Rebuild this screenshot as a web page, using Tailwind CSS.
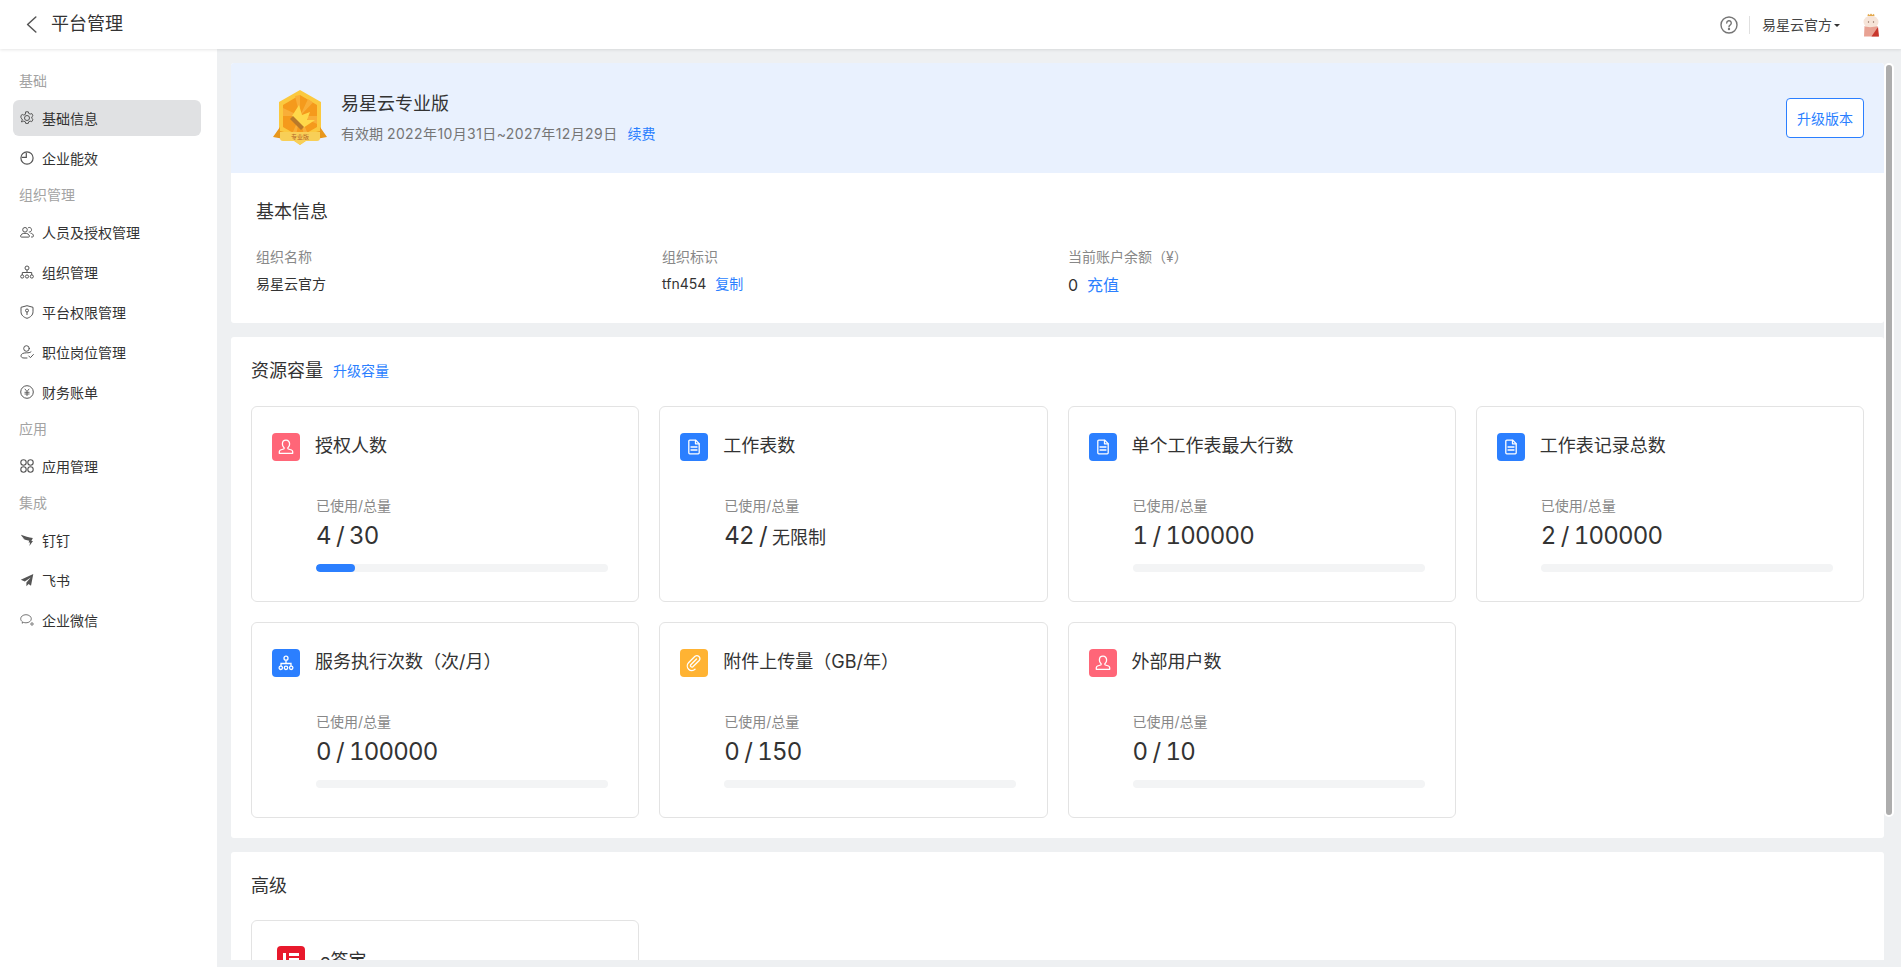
<!DOCTYPE html>
<html lang="zh">
<head>
<meta charset="utf-8">
<title>平台管理</title>
<script src="https://cdn.jsdelivr.net/npm/@tailwindcss/browser@4"></script>
</head>
<body class="h-screen overflow-hidden flex flex-col bg-[#eef0f2] text-[#333] font-['Inter','Noto_Sans_CJK_SC',sans-serif]">

<header class="relative z-10 h-[49px] shrink-0 bg-white shadow-[0_1px_3px_rgba(0,0,0,0.1)] flex items-center pl-[26px] pr-[21px]">
  <svg class="w-[11px] h-[17px]" viewBox="0 0 11 17" fill="none" stroke="#555" stroke-width="1.500" stroke-linecap="round" stroke-linejoin="round"><path d="M9.800 1 1.600 8.500l8.200 7.500"/></svg>
  <h1 class="ml-[14px] pb-[2px] text-[18px] leading-none font-normal text-[#333]">平台管理</h1>
  <div class="ml-auto flex items-center">
    <svg class="w-[18px] h-[18px]" viewBox="0 0 18 18" fill="none" stroke="#757575" stroke-width="1.400"><circle cx="9" cy="9" r="8"/><path d="M6.700 7.100a2.300 2.300 0 1 1 3.400 2c-.8.500-1.100.9-1.100 1.700" stroke-linecap="round"/><circle cx="9" cy="13" r=".5" fill="#757575"/></svg>
    <span class="ml-[11px] mr-[12px] h-[18px] w-px bg-[#e0e0e0]"></span>
    <span class="text-[14px] text-[#444]">易星云官方</span>
    <span class="ml-[2px] mt-px w-0 h-0 border-x-[3px] border-x-transparent border-t-[3px] border-t-[#333]"></span>
    <svg class="ml-[22px] w-[18px] h-[24px]" viewBox="0 0 18 24">
      <ellipse cx="9" cy="9" rx="7.500" ry="6.500" fill="#f6e4d8"/>
      <path d="M5.500 3 6 .8l1.600 1.200L9 .4l1.400 1.600L12 .8l.5 2.200z" fill="#e2a84a"/>
      <path d="M2.500 13c2 1.500 9 1.500 13 0l1 10.500H2z" fill="#e8a293"/>
      <path d="M9.500 23.500 16 14l1 9.500z" fill="#c8362c"/>
      <circle cx="6.500" cy="9" r=".7" fill="#8a6a5a"/><circle cx="11.500" cy="9" r=".7" fill="#8a6a5a"/>
    </svg>
  </div>
</header>

<div class="flex-1 min-h-0 flex">
  <nav class="w-[217px] shrink-0 bg-white pt-[15px] pl-[13px] pr-[16px] text-[14px] flex flex-col">
    <div class="h-[32px] pl-[6px] flex items-center text-[#a3a3a3]">基础</div>
    <a class="mt-[4px] mb-[2px] h-[36px] rounded-[6px] bg-[#e0e1e3] pl-[7px] flex items-center gap-[8px]">
      <svg class="w-[14px] h-[14px]" viewBox="0 0 14 14" fill="none" stroke="#555" stroke-width="1"><path d="M5.700.8h2.600l.4 1.600 1.500.7 1.500-.6 1.300 2.200-1.200 1.100v1.600l1.200 1.100-1.300 2.200-1.500-.6-1.500.7-.4 1.600H5.700l-.4-1.600-1.500-.7-1.500.6L1 10.700l1.200-1.100V8L1 6.900l-.1-.2.1-2.200 1.300-1 1.500.6 1.500-.7z" stroke-linejoin="round"/><circle cx="7" cy="7" r="2.500"/></svg>
      基础信息</a>
    <a class="mt-[2px] mb-[2px] h-[36px] pl-[7px] flex items-center gap-[8px]">
      <svg class="w-[14px] h-[14px]" viewBox="0 0 14 14" fill="none" stroke="#555" stroke-width="1.200"><circle cx="7" cy="7" r="6.100"/><path d="M6.300 1.800v4.500H1.800"/></svg>
      企业能效</a>
    <div class="h-[32px] mb-[2px] pl-[6px] flex items-center text-[#a3a3a3]">组织管理</div>
    <a class="my-[2px] h-[36px] pl-[7px] flex items-center gap-[8px]">
      <svg class="w-[14px] h-[14px]" viewBox="0 0 14 14" fill="none" stroke="#555" stroke-width="1"><circle cx="5" cy="4.800" r="2.300"/><path d="M8.200 2.700a2.300 2.300 0 1 1 .6 4.300"/><path d="M.6 11.300c0-2 2-3 4.400-3s4.400 1 4.400 3c0 .5-.3.8-.8.8H1.400c-.5 0-.8-.3-.8-.8z"/><path d="M10.500 8.200c1.700.2 2.900 1.100 2.900 2.700 0 .7-.4 1.100-1 1.100h-1.300"/></svg>
      人员及授权管理</a>
    <a class="my-[2px] h-[36px] pl-[7px] flex items-center gap-[8px]">
      <svg class="w-[14px] h-[14px]" viewBox="0 0 14 14" fill="none" stroke="#555" stroke-width="1"><circle cx="7" cy="3" r="2"/><path d="M7 5v2.500M2.300 10V7.500h9.400V10"/><circle cx="2.200" cy="11.500" r="1.600"/><circle cx="7" cy="11.500" r="1.600"/><circle cx="11.800" cy="11.500" r="1.600"/></svg>
      组织管理</a>
    <a class="my-[2px] h-[36px] pl-[7px] flex items-center gap-[8px]">
      <svg class="w-[14px] h-[14px]" viewBox="0 0 14 14" fill="none" stroke="#555" stroke-width="1"><path d="M7 .7 13 2.300v4.500c0 3.200-2.500 5.500-6 6.500C3.500 12.300 1 10 1 6.800V2.300z" stroke-linejoin="round"/><circle cx="7" cy="5.500" r="1.500"/><path d="M7 7v3"/></svg>
      平台权限管理</a>
    <a class="my-[2px] h-[36px] pl-[7px] flex items-center gap-[8px]">
      <svg class="w-[14px] h-[14px]" viewBox="0 0 14 14" fill="none" stroke="#555" stroke-width="1" stroke-linecap="round" stroke-linejoin="round"><circle cx="6.500" cy="3.500" r="2.800"/><path d="M11 6.800c-1 1-2.500 1-4.500 1C3 7.800 1 9 1 10.800c0 1.300 1 2.200 3 2.200h3"/><path d="m8.800 11 1.600 1.700 3-3.200"/></svg>
      职位岗位管理</a>
    <a class="my-[2px] h-[36px] pl-[7px] flex items-center gap-[8px]">
      <svg class="w-[14px] h-[14px]" viewBox="0 0 14 14" fill="none" stroke="#555" stroke-width="1"><circle cx="7" cy="7" r="6.300"/><path d="M4.800 3.800 7 6.500l2.200-2.700M4.500 7.300h5M4.500 9h5M7 6.500v4.500" stroke-width=".9"/></svg>
      财务账单</a>
    <div class="h-[32px] mb-[2px] pl-[6px] flex items-center text-[#a3a3a3]">应用</div>
    <a class="my-[2px] h-[36px] pl-[7px] flex items-center gap-[8px]">
      <svg class="w-[14px] h-[14px]" viewBox="0 0 14 14" fill="none" stroke="#555" stroke-width="1.100"><circle cx="3.500" cy="3.500" r="2.700"/><circle cx="10.500" cy="3.500" r="2.700"/><circle cx="3.500" cy="10.500" r="2.700"/><circle cx="10.500" cy="10.500" r="2.700"/></svg>
      应用管理</a>
    <div class="h-[32px] mb-[2px] pl-[6px] flex items-center text-[#a3a3a3]">集成</div>
    <a class="my-[2px] h-[36px] pl-[7px] flex items-center gap-[8px]">
      <svg class="w-[14px] h-[14px]" viewBox="0 0 14 14" fill="#555"><path d="M1 1.800c3.500 1.500 8 2.800 11.800 3.200-.3 1-1 2.300-1.500 3H13l-3.600 5 .7-3.400H8.500l.8-1.800C6.500 7.200 3.500 6.200 2.500 5.500l2 .3C3 5 1.700 3.500 1 1.800z"/></svg>
      钉钉</a>
    <a class="my-[2px] h-[36px] pl-[7px] flex items-center gap-[8px]">
      <svg class="w-[14px] h-[14px]" viewBox="0 0 14 14" fill="#555"><path d="M13.300 1 .8 6.700l4 1.700 6-4-4.400 5v3.800l2.200-2.200 2.400 1.700z"/></svg>
      飞书</a>
    <a class="my-[2px] h-[36px] pl-[7px] flex items-center gap-[8px]">
      <svg class="w-[14px] h-[14px]" viewBox="0 0 14 14" fill="none" stroke="#666" stroke-width=".9"><path d="M6 1.700c-3 0-5.300 1.800-5.300 4.100 0 1.300.7 2.300 1.800 3l-.4 1.400 1.600-.8c.8.300 1.500.4 2.300.4 3 0 5.300-1.800 5.300-4s-2.300-4.100-5.300-4.100z"/><circle cx="12" cy="11" r="1.200"/></svg>
      企业微信</a>
  </nav>

  <main class="relative flex-1 min-w-0 pt-[14px] pl-[14px] pr-[17px] pb-[7px]">
    <div class="h-full overflow-hidden flex flex-col gap-[14px]">

      <section class="shrink-0 bg-white rounded-[3px] overflow-hidden">
        <div class="h-[110px] bg-[#e9f1fe] flex items-center pl-[40px] pr-[20px]">
          <svg class="w-[58px] h-[58px] shrink-0" viewBox="0 0 58 58">
            <path d="M29 1 50 13v29L29 56 8 42V13z" fill="#fbc93f"/>
            <path d="M29 6 46 16v22L29 48 12 38V16z" fill="#f59a1c"/>
            <path d="M29 27 24 7l5-1zm0 0 8-17 5 3.500zm0 0h17v8zM29 27H12v-8zm0 0-8 18 4 1.500zm0 0 8 18-4 1.500z" fill="#f9ae38"/>
            <path d="M21 27 28 16l3 10 8-3-3 8 8 0-12 8z" fill="#ffd84a"/>
            <path d="M19 30 22 27 33 38 30 41z" fill="#b8792a"/>
            <path d="M2 48 9 38v4l4 1v7z" fill="#e8971c"/>
            <path d="M56 48 49 38v4l-4 1v7z" fill="#e8971c"/>
            <path d="M9 43h40v6c0 2-1 3-3 3H34l-5 4-5-4H12c-2 0-3-1-3-3z" fill="#f8cf57"/>
            <text x="29" y="50" text-anchor="middle" font-size="6" fill="#b5652a" font-family="Noto Sans CJK SC">专业版</text>
          </svg>
          <div class="ml-[12px] pb-[2px]">
            <div class="text-[18px] leading-[26px] text-[#333]">易星云专业版</div>
            <div class="mt-[7px] text-[14px] leading-[20px] text-[#757575]">有效期 <span class="tracking-[0.4px]">2022年10月31日~2027年12月29日</span><a class="ml-[10px] text-[#2b7fff]">续费</a></div>
          </div>
          <button class="ml-auto w-[78px] h-[40px] bg-white border border-[#2b7fff] rounded-[4px] text-[14px] text-[#2b7fff]">升级版本</button>
        </div>
        <div class="h-[150px] pl-[25px] pt-[28px]">
          <h2 class="text-[18px] leading-[22px] font-normal">基本信息</h2>
          <div class="mt-[24px] grid grid-cols-[406px_406px_1fr] text-[14px]">
            <div>
              <div class="leading-[20px] text-[#888]">组织名称</div>
              <div class="mt-[7px] leading-[20px]">易星云官方</div>
            </div>
            <div>
              <div class="leading-[20px] text-[#888]">组织标识</div>
              <div class="mt-[7px] leading-[20px]">tfn454<a class="ml-[9px] text-[#2b7fff]">复制</a></div>
            </div>
            <div>
              <div class="leading-[20px] text-[#888]">当前账户余额（¥）</div>
              <div class="mt-[8px] leading-[20px] text-[16px]">0<a class="ml-[9px] text-[#2b7fff]">充值</a></div>
            </div>
          </div>
        </div>
      </section>

      <section class="shrink-0 bg-white rounded-[3px] px-[20px] pt-[21px] pb-[20px]">
        <div class="flex items-center h-[24px]">
          <h2 class="text-[18px] font-normal">资源容量</h2>
          <a class="ml-[10px] text-[14px] text-[#2b7fff]">升级容量</a>
        </div>
        <div class="mt-[24px] grid grid-cols-4 gap-[20px]">

          <article class="h-[196px] border border-[#e3e3e3] rounded-[6px] pl-[20px] pt-[25px]">
            <div class="flex items-center gap-[15px] text-[18px]">
              <span class="w-[28px] h-[28px] rounded-[4px] bg-[#ff6678] flex items-center justify-center"><svg class="w-[16px] h-[16px]" viewBox="0 0 16 16" fill="none" stroke="#fff" stroke-width="1.300" stroke-linejoin="round"><path d="M8 1.200c-2.200 0-3.600 1.600-3.600 3.800 0 1.500.6 2.800 1.500 3.500.4.400.3 1.200-.3 1.500L2.500 11c-.8.400-1.200 1-1.200 1.800v1.500h13.400v-1.500c0-.8-.4-1.400-1.200-1.800l-3.100-1c-.6-.3-.7-1.100-.3-1.500.9-.7 1.500-2 1.500-3.500 0-2.200-1.400-3.800-3.600-3.800z"/></svg></span>
              <span class="pb-[2px]">授权人数</span>
            </div>
            <div class="ml-[44px] mt-[35px] w-[292px]">
              <div class="text-[14px] leading-[20px] text-[#888]">已使用/总量</div>
              <div class="mt-[5px] text-[24px] leading-[30px] tabular-nums tracking-[-0.8px] [word-spacing:-0.500px]">4 / 30</div>
              <div class="mt-[13px] h-[8px] rounded-full bg-[#f3f4f5] overflow-hidden"><div class="h-full rounded-full bg-[#2b7fff]" style="width:13.33%"></div></div>
            </div>
          </article>

          <article class="h-[196px] border border-[#e3e3e3] rounded-[6px] pl-[20px] pt-[25px]">
            <div class="flex items-center gap-[15px] text-[18px]">
              <span class="w-[28px] h-[28px] rounded-[4px] bg-[#2b7fff] flex items-center justify-center"><svg class="w-[16px] h-[16px]" viewBox="0 0 16 16" fill="none" stroke="#fff" stroke-width="1.300" stroke-linejoin="round"><path d="M2.800 2.200c0-.6.400-1 1-1H9.800l3.400 3.400v9.200c0 .6-.4 1-1 1H3.800c-.6 0-1-.4-1-1z"/><path d="M9.500 1.500v3.300h3.500M5 8h6M5 11h6" stroke-linecap="round"/></svg></span>
              <span class="pb-[2px]">工作表数</span>
            </div>
            <div class="ml-[44px] mt-[35px] w-[292px]">
              <div class="text-[14px] leading-[20px] text-[#888]">已使用/总量</div>
              <div class="mt-[5px] text-[24px] leading-[30px] tabular-nums tracking-[-0.8px] [word-spacing:-0.500px]">42 / <span class="text-[18px] tracking-normal">无限制</span></div>
            </div>
          </article>

          <article class="h-[196px] border border-[#e3e3e3] rounded-[6px] pl-[20px] pt-[25px]">
            <div class="flex items-center gap-[15px] text-[18px]">
              <span class="w-[28px] h-[28px] rounded-[4px] bg-[#2b7fff] flex items-center justify-center"><svg class="w-[16px] h-[16px]" viewBox="0 0 16 16" fill="none" stroke="#fff" stroke-width="1.300" stroke-linejoin="round"><path d="M2.800 2.200c0-.6.400-1 1-1H9.800l3.400 3.400v9.200c0 .6-.4 1-1 1H3.800c-.6 0-1-.4-1-1z"/><path d="M9.500 1.500v3.300h3.500M5 8h6M5 11h6" stroke-linecap="round"/></svg></span>
              <span class="pb-[2px]">单个工作表最大行数</span>
            </div>
            <div class="ml-[44px] mt-[35px] w-[292px]">
              <div class="text-[14px] leading-[20px] text-[#888]">已使用/总量</div>
              <div class="mt-[5px] text-[24px] leading-[30px] tabular-nums tracking-[-0.8px] [word-spacing:-0.500px]">1 / 100000</div>
              <div class="mt-[13px] h-[8px] rounded-full bg-[#f3f4f5]"></div>
            </div>
          </article>

          <article class="h-[196px] border border-[#e3e3e3] rounded-[6px] pl-[20px] pt-[25px]">
            <div class="flex items-center gap-[15px] text-[18px]">
              <span class="w-[28px] h-[28px] rounded-[4px] bg-[#2b7fff] flex items-center justify-center"><svg class="w-[16px] h-[16px]" viewBox="0 0 16 16" fill="none" stroke="#fff" stroke-width="1.300" stroke-linejoin="round"><path d="M2.800 2.200c0-.6.400-1 1-1H9.800l3.400 3.400v9.200c0 .6-.4 1-1 1H3.800c-.6 0-1-.4-1-1z"/><path d="M9.500 1.500v3.300h3.500M5 8h6M5 11h6" stroke-linecap="round"/></svg></span>
              <span class="pb-[2px]">工作表记录总数</span>
            </div>
            <div class="ml-[44px] mt-[35px] w-[292px]">
              <div class="text-[14px] leading-[20px] text-[#888]">已使用/总量</div>
              <div class="mt-[5px] text-[24px] leading-[30px] tabular-nums tracking-[-0.8px] [word-spacing:-0.500px]">2 / 100000</div>
              <div class="mt-[13px] h-[8px] rounded-full bg-[#f3f4f5]"></div>
            </div>
          </article>

          <article class="h-[196px] border border-[#e3e3e3] rounded-[6px] pl-[20px] pt-[25px]">
            <div class="flex items-center gap-[15px] text-[18px]">
              <span class="w-[28px] h-[28px] rounded-[4px] bg-[#2b7fff] flex items-center justify-center"><svg class="w-[16px] h-[16px]" viewBox="0 0 16 16" fill="none" stroke="#fff" stroke-width="1.300"><circle cx="8" cy="3.200" r="2"/><path d="M8 5.200v3.300M3 11V8.500h10V11"/><circle cx="2.800" cy="12.800" r="1.700"/><circle cx="8" cy="12.800" r="1.700"/><circle cx="13.200" cy="12.800" r="1.700"/></svg></span>
              <span class="pb-[2px]">服务执行次数（次/月）</span>
            </div>
            <div class="ml-[44px] mt-[35px] w-[292px]">
              <div class="text-[14px] leading-[20px] text-[#888]">已使用/总量</div>
              <div class="mt-[5px] text-[24px] leading-[30px] tabular-nums tracking-[-0.8px] [word-spacing:-0.500px]">0 / 100000</div>
              <div class="mt-[13px] h-[8px] rounded-full bg-[#f3f4f5]"></div>
            </div>
          </article>

          <article class="h-[196px] border border-[#e3e3e3] rounded-[6px] pl-[20px] pt-[25px]">
            <div class="flex items-center gap-[15px] text-[18px]">
              <span class="w-[28px] h-[28px] rounded-[4px] bg-[#ffb333] flex items-center justify-center"><svg class="w-[18px] h-[18px]" viewBox="0 0 18 18" fill="none" stroke="#fff" stroke-width="1.300" stroke-linecap="round"><path d="M11.500 6 5.800 11.700a1.500 1.500 0 0 0 2.100 2.100l6.300-6.300a3 3 0 0 0-4.200-4.200L3.500 9.800a4.600 4.600 0 0 0 6.500 6.500" transform="translate(0 -1)"/></svg></span>
              <span class="pb-[2px]">附件上传量（GB/年）</span>
            </div>
            <div class="ml-[44px] mt-[35px] w-[292px]">
              <div class="text-[14px] leading-[20px] text-[#888]">已使用/总量</div>
              <div class="mt-[5px] text-[24px] leading-[30px] tabular-nums tracking-[-0.8px] [word-spacing:-0.500px]">0 / 150</div>
              <div class="mt-[13px] h-[8px] rounded-full bg-[#f3f4f5]"></div>
            </div>
          </article>

          <article class="h-[196px] border border-[#e3e3e3] rounded-[6px] pl-[20px] pt-[25px]">
            <div class="flex items-center gap-[15px] text-[18px]">
              <span class="w-[28px] h-[28px] rounded-[4px] bg-[#ff6678] flex items-center justify-center"><svg class="w-[16px] h-[16px]" viewBox="0 0 16 16" fill="none" stroke="#fff" stroke-width="1.300" stroke-linejoin="round"><path d="M8 1.200c-2.200 0-3.600 1.600-3.600 3.800 0 1.500.6 2.800 1.500 3.500.4.400.3 1.200-.3 1.500L2.500 11c-.8.400-1.200 1-1.200 1.800v1.500h13.400v-1.500c0-.8-.4-1.400-1.200-1.800l-3.100-1c-.6-.3-.7-1.100-.3-1.500.9-.7 1.500-2 1.500-3.500 0-2.200-1.400-3.800-3.600-3.800z"/></svg></span>
              <span class="pb-[2px]">外部用户数</span>
            </div>
            <div class="ml-[44px] mt-[35px] w-[292px]">
              <div class="text-[14px] leading-[20px] text-[#888]">已使用/总量</div>
              <div class="mt-[5px] text-[24px] leading-[30px] tabular-nums tracking-[-0.8px] [word-spacing:-0.500px]">0 / 10</div>
              <div class="mt-[13px] h-[8px] rounded-full bg-[#f3f4f5]"></div>
            </div>
          </article>
        </div>
      </section>

      <section class="shrink-0 bg-white rounded-[3px] px-[20px] pt-[22px]">
        <h2 class="text-[18px] leading-[24px] font-normal">高级</h2>
        <div class="mt-[22px] grid grid-cols-4 gap-[20px]">
          <article class="h-[196px] border border-[#e3e3e3] rounded-[6px] pl-[25px] pt-[25px]">
            <div class="flex items-center gap-[15px] text-[18px]">
              <span class="w-[28px] h-[28px] rounded-[4px] bg-[#e8192c] flex items-center justify-center"><svg class="w-[20px] h-[20px]" viewBox="0 0 20 20" fill="#fff"><path d="M2 3h3v14H2zM8 3h10v3H8zM8 8h10v3H8zM8 13h10v4H8z"/></svg></span>
              e签宝
            </div>
          </article>
        </div>
      </section>
    </div>

    <div class="absolute top-[14px] right-[7px] w-[10px] h-[754px] border-2 border-white rounded-full bg-[#adadad]"></div>
  </main>
</div>
</body>
</html>
